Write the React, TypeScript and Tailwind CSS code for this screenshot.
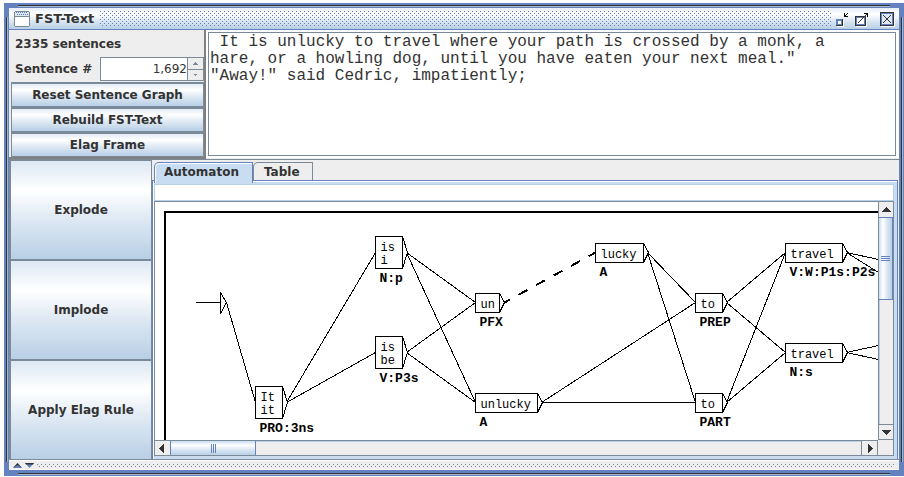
import React, { useState } from "react";

const SENTENCE =
  ' It is unlucky to travel where your path is crossed by a monk, a\nhare, or a howling dog, until you have eaten your next meal."\n"Away!" said Cedric, impatiently;';

const STEEL =
  "bg-[linear-gradient(to_bottom,#dde8f3_0%,#ffffff_30%,#dde8f3_60%,#b8cfe5_100%)]";

type GraphNode = {
  x: number;
  y: number;
  w: number;
  lines: string[];
  tag: string;
};

const NODES: GraphNode[] = [
  { x: 255, y: 402, w: 27, lines: ["It", "it"], tag: "PRO:3ns" },
  { x: 375, y: 252, w: 27, lines: ["is", "i"], tag: "N:p" },
  { x: 375, y: 352, w: 27, lines: ["is", "be"], tag: "V:P3s" },
  { x: 475, y: 302, w: 24, lines: ["un"], tag: "PFX" },
  { x: 475, y: 402, w: 62, lines: ["unlucky"], tag: "A" },
  { x: 595, y: 252, w: 48, lines: ["lucky"], tag: "A" },
  { x: 695, y: 302, w: 27, lines: ["to"], tag: "PREP" },
  { x: 695, y: 402, w: 27, lines: ["to"], tag: "PART" },
  { x: 785, y: 252, w: 57, lines: ["travel"], tag: "V:W:P1s:P2s" },
  { x: 785, y: 352, w: 57, lines: ["travel"], tag: "N:s" },
];

const EDGES = [
  [226, 302, 255, 402],
  [286, 402, 375, 252],
  [286, 402, 375, 352],
  [406, 252, 475, 302],
  [406, 252, 475, 402],
  [406, 352, 475, 302],
  [406, 352, 475, 402],
  [541, 402, 695, 302],
  [541, 402, 695, 402],
  [647, 252, 695, 302],
  [647, 252, 695, 402],
  [726, 302, 785, 252],
  [726, 302, 785, 352],
  [726, 402, 785, 252],
  [726, 402, 785, 352],
  [846, 252, 910, 266],
  [846, 252, 910, 292],
  [846, 352, 910, 338],
  [846, 352, 910, 366],
];

function Automaton() {
  return (
    <svg className="block h-full w-full" role="img" aria-label="Sentence automaton">
      <g transform="translate(-155 -202)" stroke="#000" fill="none" shapeRendering="crispEdges">
        <rect x="165" y="212" width="2400" height="900" strokeWidth="2" />
        <g transform="translate(0.5 0.5)">
          <path d="M195 302H220M220 292L226 302L220 313Z" />
          {EDGES.map(([x1, y1, x2, y2], i) => (
            <line key={i} x1={x1} y1={y1} x2={x2} y2={y2} />
          ))}
          <line x1="504" y1="302" x2="595" y2="252" strokeWidth="2" strokeDasharray="10 10" strokeDashoffset="4" />
          {NODES.map((n, i) => {
            const half = n.lines.length > 1 ? 16 : 9;
            const top = n.y - half;
            const bottom = n.lines.length > 1 ? n.y + 16 : n.y + 10;
            const right = n.x + n.w;
            return (
              <g key={i}>
                <path
                  fill="#fff"
                  d={`M${n.x} ${top}H${right}V${bottom}H${n.x}ZM${right} ${top}L${right + 5} ${n.y}L${right} ${bottom}`}
                />
                <g
                  stroke="none"
                  fill="#000"
                  className="font-['Liberation_Mono',monospace]"
                >
                  {n.lines.map((t, j) => (
                    <text key={j} x={n.x + 5} y={top + 14 + j * 13} className="text-[12px]">
                      {t}
                    </text>
                  ))}
                  <text x={n.x + 4} y={bottom + 13} className="text-[13px] font-bold">
                    {n.tag}
                  </text>
                </g>
              </g>
            );
          })}
        </g>
      </g>
    </svg>
  );
}

function Dots({ id, color }: { id: string; color: string }) {
  return (
    <svg className="block h-full w-full" aria-hidden="true" shapeRendering="crispEdges">
      <pattern id={id} width="4" height="4" patternUnits="userSpaceOnUse">
        <rect width="1" height="1" fill={color} />
        <rect x="2" y="2" width="1" height="1" fill={color} />
      </pattern>
      <rect width="100%" height="100%" fill={`url(#${id})`} />
    </svg>
  );
}

function Arrow({ d, small }: { d: string; small?: boolean }) {
  return (
    <svg width="9" height="9" viewBox="0 0 9 9" shapeRendering="crispEdges" aria-hidden="true">
      <path d={d} fill={small ? "#7a8a99" : "#333"} />
    </svg>
  );
}

function TitleBar() {
  return (
    <header className="flex h-[22px] items-center border-b border-[#6382bf] bg-[linear-gradient(to_bottom,#e6eef7_0%,#ffffff_30%,#dde8f3_60%,#b8cfe5_100%)] pl-[5px] pr-1">
      <svg width="16" height="16" viewBox="0 0 16 16" shapeRendering="crispEdges" aria-hidden="true">
        <path d="M1 0H15V1H16V15H15V16H1V15H0V1H1Z" fill="#7a8a99" />
        <rect x="1" y="1" width="14" height="4" fill="#dde8f3" />
        <rect x="1" y="6" width="14" height="9" fill="#fff" />
        <path d="M2 1.500H14M3 3.500H14" stroke="#6382bf" strokeDasharray="1 1" />
      </svg>
      <h1 className="ml-[5px] text-[13px] font-bold">FST-Text</h1>
      <div className="ml-[6px] mr-[4px] h-[15px] min-w-0 flex-1">
        <Dots id="title-dots" color="#6382bf" />
      </div>
      <button aria-label="Iconify" className="size-4">
        <svg width="16" height="16" viewBox="0 0 16 16" shapeRendering="crispEdges">
          <rect x="2" y="9" width="7" height="7" fill="#fff" />
          <rect x="1" y="8" width="7" height="7" fill="#333" />
          <rect x="1" y="8" width="6" height="6" fill="#6382bf" />
          <rect x="3" y="10" width="3" height="3" fill="#fff" />
          <path d="M9 2h1v3h3v1h-4zM10 4h1v-1h1v-1h1v1h-1v1h-1v1h-1z" fill="#000" />
        </svg>
      </button>
      <button aria-label="Maximize" className="ml-1 size-4">
        <svg width="16" height="16" viewBox="0 0 16 16" shapeRendering="crispEdges">
          <rect x="1" y="6" width="11" height="10" fill="#fff" />
          <rect x="0" y="5" width="11" height="10" fill="#333" />
          <rect x="1" y="6" width="9" height="8" fill="#6382bf" />
          <rect x="2" y="7" width="7" height="6" fill="#fff" />
          <path d="M3 12L12 3" stroke="#333" strokeWidth="1" />
          <path d="M9 2h4v4h-1v-3h-3z" fill="#000" />
        </svg>
      </button>
      <button aria-label="Close" className="ml-[8px] size-4">
        <svg width="16" height="16" viewBox="0 0 16 16" shapeRendering="crispEdges">
          <rect x="2" y="2" width="14" height="14" fill="#fff" />
          <rect x="1" y="1" width="14" height="14" fill="#333" />
          <rect x="2" y="2" width="12" height="12" fill="#6382bf" />
          <rect x="3" y="3" width="10" height="10" fill="#dde8f3" />
          <path d="M4 4L12 12M12 4L4 12" stroke="#333" strokeWidth="1" />
        </svg>
      </button>
    </header>
  );
}

export default function App() {
  const [tab, setTab] = useState("Automaton");
  return (
    <div className="h-screen min-h-[400px] bg-white pt-[3px] pb-px pl-1 font-['DejaVu_Sans',sans-serif] text-[12px] text-[#333]">
      <main className="relative flex h-full flex-col bg-[#6382bf] p-[5px] pb-[6px]">
        <div className="absolute top-[2px] right-[14px] left-[14px] h-px bg-[#333] shadow-[0_1px_#a3b8cc]" />
        <div className="absolute right-[14px] bottom-[2px] left-[14px] h-px bg-[#333] shadow-[0_1px_#a3b8cc]" />
        <div className="absolute top-[14px] bottom-[14px] left-[2px] w-px bg-[#333] shadow-[1px_0_#a3b8cc]" />
        <div className="absolute top-[14px] right-[2px] bottom-[14px] w-px bg-[#333] shadow-[1px_0_#a3b8cc]" />
        <TitleBar />

        <section className="flex h-[129px] bg-white">
          <div className="flex w-[197px] flex-col border-r-2 border-b-2 border-[#808080] bg-[#eeeeee] pt-px pl-[2px]">
            <div className="flex h-[26px] items-center pl-1 font-bold">2335 sentences</div>
            <div className="flex h-[25px] pb-px">
              <label htmlFor="sentence" className="flex min-w-0 flex-1 items-center pl-1 font-bold whitespace-nowrap">
                Sentence #
              </label>
              <input
                id="sentence"
                type="text"
                defaultValue="1,692"
                className="w-[88px] border border-[#7a8a99] bg-white text-right outline-none"
              />
              <div className="flex w-4 flex-col border-y border-r border-[#7a8a99]">
                <button aria-label="Next sentence" className="flex flex-1 items-center justify-center border-b border-[#7a8a99]">
                  <Arrow small d="M4 3h1v1h1v1h1v1H2V5h1V4h1z" />
                </button>
                <button aria-label="Previous sentence" className="flex flex-1 items-center justify-center">
                  <Arrow small d="M3 4h3v1H5v1H4V5H3z" />
                </button>
              </div>
            </div>
            {["Reset Sentence Graph", "Rebuild FST-Text", "Elag Frame"].map((t) => (
              <button key={t} className={`h-[25px] border border-[#7a8a99] shadow-[inset_0_1px_#7a8a99] font-bold whitespace-nowrap ${STEEL}`}>
                {t}
              </button>
            ))}
          </div>
          <div className="flex min-w-0 flex-1 border-b border-[#eeeeee] py-[2px] pr-[3px] pl-[2px]">
            <textarea
              aria-label="Sentence text"
              defaultValue={SENTENCE}
              className="min-w-0 flex-1 resize-none overflow-hidden border border-[#7a8a99] bg-white p-px font-['Liberation_Mono',monospace] text-[16px] leading-[17px] outline-none"
            />
          </div>
        </section>

        <section className="flex min-h-0 flex-1 border-t border-b border-[#7a8a99] bg-[#eeeeee]">
          <div className="flex w-[143px] flex-col bg-[#7a8a99] pt-px pr-px pl-[2px]">
            <div className="flex flex-1 flex-col gap-[2px]">
              {["Explode", "Implode", "Apply Elag Rule"].map((t) => (
                <button key={t} className={`flex-1 font-bold ${STEEL}`}>
                  {t}
                </button>
              ))}
            </div>
          </div>

          <div className="flex min-w-0 flex-1 flex-col pr-px">
            <div role="tablist" className="flex h-5 pt-[2px] pl-[2px]">
              {["Automaton", "Table"].map((t) => (
                <button
                  key={t}
                  role="tab"
                  aria-selected={tab === t}
                  onClick={() => setTab(t)}
                  className={
                    tab === t
                      ? "relative -mb-[3px] h-[21px] rounded-tl-[5px] border border-b-0 border-[#6382bf] bg-[#c8ddf2] pr-[13px] pl-[9px] pb-[2px] font-bold shadow-[inset_1px_1px_#fff]"
                      : "h-[19px] rounded-tl-[5px] border border-b-0 border-[#7a8a99] bg-[#eeeeee] pr-[12px] pl-[10px] font-bold"
                  }
                >
                  {t}
                </button>
              ))}
            </div>
            <div
              role="tabpanel"
              className="flex min-h-0 flex-1 flex-col border-t border-r border-l border-[#6382bf] bg-[#c8ddf2] pt-[3px] pr-[3px] pb-[3px] pl-px shadow-[inset_1px_1px_#fff]"
            >
              <input
                type="text"
                aria-label="Filter"
                className="h-[17px] w-full border border-[#b8cfe5] bg-white outline-none"
              />
              <div className="grid min-h-0 flex-1 grid-cols-[1fr_15px] grid-rows-[1fr_15px] border border-[#7a8a99] bg-[#eeeeee]">
                <div className="min-h-0 min-w-0 overflow-hidden bg-white">
                  <Automaton />
                </div>
                <div className="flex flex-col border-l border-[#7a8a99]">
                  <button aria-label="Scroll up" className="flex h-[15px] items-center justify-center">
                    <Arrow d="M4 2h1v1h1v1h1v1h1v1h1v1H0V6h1V5h1V4h1V3h1z" />
                  </button>
                  <div className="flex h-[83px] flex-col items-center justify-center gap-px border border-l-0 border-[#6382bf] bg-[linear-gradient(to_right,#c8ddf2_0%,#ffffff_30%,#dde8f3_60%,#b8cfe5_100%)]">
                    <span className="h-px w-[9px] bg-[#6382bf]" />
                    <span className="h-px w-[9px] bg-[#6382bf]" />
                    <span className="h-px w-[9px] bg-[#6382bf]" />
                  </div>
                  <div className="flex-1 border-l border-[#b8cfe5]" />
                  <button aria-label="Scroll down" className="flex h-4 items-center justify-center border-y border-[#7a8a99]">
                    <Arrow d="M0 2h9v1H8v1H7v1H6v1H5v1H4V6H3V5H2V4H1V3H0z" />
                  </button>
                </div>
                <div className="flex border-t border-[#7a8a99]">
                  <button aria-label="Scroll left" className="flex w-[15px] items-center justify-center">
                    <Arrow d="M6 0v9H5V8H4V7H3V6H2V5H1V4h1V3h1V2h1V1h1V0z" />
                  </button>
                  <div className="flex w-[86px] items-center justify-center gap-px border-x border-[#6382bf] bg-[linear-gradient(to_bottom,#c8ddf2_0%,#ffffff_30%,#dde8f3_60%,#b8cfe5_100%)]">
                    <span className="h-[9px] w-px bg-[#6382bf]" />
                    <span className="h-[9px] w-px bg-[#6382bf]" />
                    <span className="h-[9px] w-px bg-[#6382bf]" />
                  </div>
                  <div className="flex-1 border-t border-[#b8cfe5]" />
                  <button aria-label="Scroll right" className="flex w-[17px] items-center justify-center border-x border-[#7a8a99]">
                    <Arrow d="M3 0v9h1V8h1V7h1V6h1V5h1V4H7V3H6V2H5V1H4V0z" />
                  </button>
                </div>
                <div />
              </div>
            </div>
          </div>
        </section>

        <footer className="flex h-[10px] items-center border-y border-white bg-[#eeeeee] px-1">
          <button aria-label="Collapse up" className="w-[12px]">
            <svg width="9" height="5" viewBox="0 0 9 5" className="block">
              <path d="M0 5L4.500 0L9 5Z" fill="#6382bf" />
              <path d="M4.500 0L9 5L4.500 2L0 5Z" fill="#333" />
            </svg>
          </button>
          <button aria-label="Collapse down" className="w-[12px]">
            <svg width="9" height="5" viewBox="0 0 9 5" className="block">
              <path d="M0 0L4.500 5L9 0Z" fill="#6382bf" />
              <path d="M0 0H9L8 1.500H1Z" fill="#333" />
            </svg>
          </button>
          <div className="h-[3px] flex-1">
            <Dots id="split-dots" color="#7a8a99" />
          </div>
        </footer>
      </main>
    </div>
  );
}
